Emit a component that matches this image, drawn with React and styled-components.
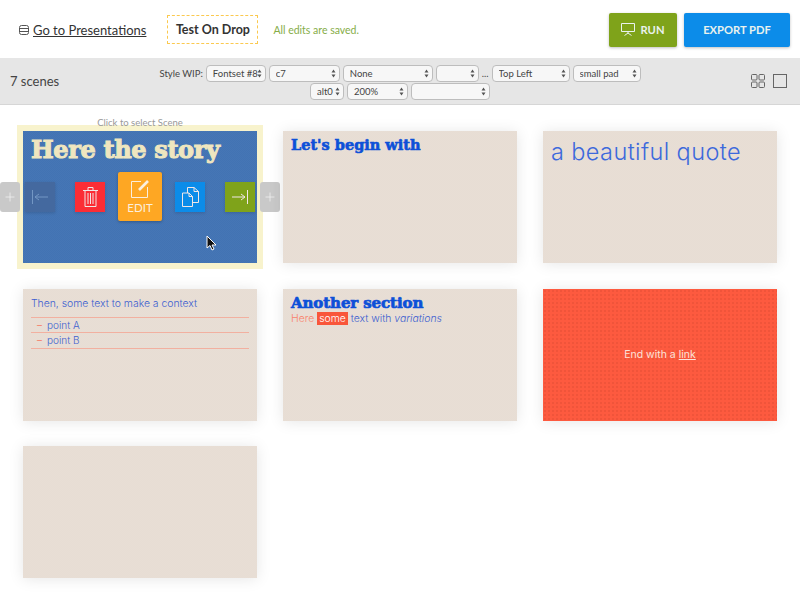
import React from 'react';
import styled, { createGlobalStyle } from 'styled-components';
import { Plus } from 'lucide-react';

const GlobalStyle = createGlobalStyle`
  html, body {
    margin: 0;
    padding: 0;
    background: #fff;
    font-family: Lato, "Liberation Sans", sans-serif;
    color: #333;
  }
`;

const Page = styled.div`
  width: 800px;
  height: 600px;
  overflow: hidden;
`;

const Header = styled.header`
  height: 58px;
  box-sizing: border-box;
  display: flex;
  align-items: center;
  padding: 1px 10px 0 19px;
`;

const BackLink = styled.a`
  display: flex;
  align-items: center;
  gap: 4px;
  font-size: 13px;
  color: #333;
  text-decoration: underline;
`;

const DeckName = styled.div`
  margin-left: 21px;
  width: 91px;
  height: 29px;
  box-sizing: border-box;
  border: 1px dashed #fbc94f;
  display: flex;
  align-items: center;
  justify-content: center;
  font-size: 12.5px;
  font-weight: 700;
  color: #333;
  white-space: nowrap;
`;

const Saved = styled.div`
  margin-left: 15px;
  font-size: 10.5px;
  color: #86ad48;
`;

const HeaderActions = styled.div`
  margin-left: auto;
  display: flex;
  gap: 7px;
`;

const ActionButton = styled.button`
  width: ${({ $width }) => $width}px;
  height: 34px;
  border: 0;
  border-radius: 2px;
  background: ${({ $color }) => $color};
  color: #e9f2ee;
  font-family: inherit;
  font-size: 11.2px;
  font-weight: 700;
  display: flex;
  align-items: center;
  justify-content: center;
  gap: 5px;
  box-shadow: 0 1px 3px rgba(0, 0, 0, 0.25);
`;

const Toolbar = styled.div`
  height: 47px;
  box-sizing: border-box;
  background: #e6e6e6;
  border-bottom: 1px solid #d6d6d6;
  display: flex;
  align-items: center;
  padding: 0 13px 0 10px;
  position: relative;
`;

const SceneCount = styled.div`
  width: 90px;
  font-size: 13px;
  color: #444;
`;

const StyleControls = styled.div`
  position: absolute;
  left: 150px;
  right: 150px;
  top: 7px;
  display: flex;
  flex-wrap: wrap;
  justify-content: center;
  align-items: center;
  gap: 1px 3px;
  font-size: 9.5px;
  color: #444;
`;

const SelectWrap = styled.span`
  position: relative;
  display: inline-flex;
  width: ${({ $width }) => $width}px;
  height: 17px;
`;

const Select = styled.select`
  appearance: none;
  width: 100%;
  height: 100%;
  box-sizing: border-box;
  margin: 0;
  padding: 0 0 0 6px;
  border: 1px solid #bdbdbd;
  border-radius: 4px;
  background: #f7f7f7;
  font-family: inherit;
  font-size: 9.5px;
  color: #444;
`;

const Chevrons = styled.svg`
  position: absolute;
  right: 4px;
  top: 4px;
  width: 5px;
  height: 9px;
  pointer-events: none;
`;

const ViewToggles = styled.div`
  margin-left: auto;
  display: flex;
  gap: 8px;
  color: #666;
`;

const Grid = styled.main`
  display: grid;
  grid-template-columns: repeat(3, 234px);
  grid-auto-rows: 132px;
  gap: 25.5px 26px;
  padding: 26px 0 0 23px;
`;

const Scene = styled.article`
  position: relative;
  box-sizing: border-box;
  background-color: ${({ $bg }) => $bg || '#e7ddd4'};
  background-image: ${({ $dotted }) =>
    $dotted
      ? 'radial-gradient(rgba(190, 60, 40, 0.2) 0.8px, transparent 1px)'
      : 'repeating-conic-gradient(rgba(255, 255, 255, 0.025) 0 25%, transparent 0 50%)'};
  background-size: ${({ $dotted }) => ($dotted ? '4px 4px' : '2px 2px')};
  padding: ${({ $padding }) => $padding || '6px 8px'};
  box-shadow: ${({ $selected }) =>
    $selected ? '0 0 0 6px #f8f3cd' : '0 1px 14px rgba(0, 0, 0, 0.1)'};
`;

const SelectHint = styled.div`
  position: absolute;
  top: -14px;
  left: 0;
  right: 0;
  text-align: center;
  font-size: 9.5px;
  color: #999;
`;

const SlabTitle = styled.h2`
  margin: 0;
  font-family: "DejaVu Serif", serif;
  font-weight: 700;
  font-size: ${({ $size }) => $size}px;
  line-height: ${({ $line }) => $line}px;
  color: ${({ $color }) => $color || '#0d50d8'};
  -webkit-text-stroke: ${({ $stroke }) => $stroke}px currentColor;
  letter-spacing: ${({ $spacing }) => $spacing || 0}px;
  white-space: nowrap;
`;

const Quote = styled.div`
  font-family: Inter, sans-serif;
  font-weight: 300;
  font-size: 23.5px;
  letter-spacing: 0.4px;
  line-height: 30px;
  color: #3d69dc;
`;

const BodyText = styled.p`
  margin: 0;
  font-family: Inter, sans-serif;
  font-weight: 300;
  font-size: 10.4px;
  line-height: 14px;
  color: #3d5fd0;
`;

const Points = styled.ul`
  list-style: none;
  margin: 6px 0 0;
  padding: 0;
  border-top: 1px solid #f2b0a0;
`;

const Point = styled.li`
  height: 14.5px;
  border-bottom: 1px solid #f2b0a0;
  padding-left: 6px;
  font-family: Inter, sans-serif;
  font-weight: 300;
  font-size: 10px;
  line-height: 14.5px;
  color: #3d5fd0;

  &::before {
    content: '–';
    color: #f9664a;
    margin-right: 5px;
  }
`;

const Salmon = styled.span`
  color: #f9826c;
`;

const Mark = styled.span`
  background: #f9563a;
  color: #fff;
  padding: 0 2px;
`;

const EndText = styled.div`
  height: 100%;
  display: flex;
  align-items: center;
  justify-content: center;
  gap: 3px;
  font-family: Inter, sans-serif;
  font-size: 10.5px;
  color: #fbe2da;

  a {
    color: inherit;
    text-decoration: underline;
  }
`;

const HoverControls = styled.div`
  position: absolute;
  left: 2px;
  top: 41px;
  height: 49px;
  display: flex;
  align-items: center;
  gap: 20px;
`;

const ControlButton = styled.button`
  width: 30px;
  height: 30px;
  padding: 0;
  border: 0;
  background: ${({ $color }) => $color};
  color: ${({ $faded }) => ($faded ? '#7397c4' : '#f1e6e6')};
  display: flex;
  align-items: center;
  justify-content: center;
  box-shadow: 0 1px 3px rgba(0, 0, 0, 0.15);
`;

const EditButton = styled.button`
  width: 44px;
  height: 49px;
  margin: 0 -7px;
  padding: 0;
  border: 0;
  border-radius: 2px;
  background: #fea723;
  color: #fbeedd;
  font-family: inherit;
  font-size: 11.5px;
  display: flex;
  flex-direction: column;
  align-items: center;
  justify-content: center;
  gap: 3px;
  box-shadow: 0 1px 3px rgba(0, 0, 0, 0.25);
`;

const InsertButton = styled.button`
  position: absolute;
  top: 51px;
  ${({ $side }) => ($side === 'left' ? 'left: -23px;' : 'right: -23px;')}
  width: 20px;
  height: 30px;
  padding: 0;
  border: 0;
  border-radius: 3px;
  background: #c9c9c9;
  color: #f5f5f5;
  display: flex;
  align-items: center;
  justify-content: center;
`;

const Cursor = styled.svg`
  position: absolute;
  left: 183px;
  top: 104px;
`;

const LineIcon = ({ width, height, children }) => (
  <svg
    width={width}
    height={height}
    viewBox={`0 0 ${width} ${height}`}
    fill="none"
    stroke="currentColor"
    strokeWidth="1"
  >
    {children}
  </svg>
);

const SelectField = ({ width, value }) => (
  <SelectWrap $width={width}>
    <Select defaultValue={value}>
      <option value={value}>{value}</option>
    </Select>
    <Chevrons viewBox="0 0 5 9">
      <path d="M2.5 0.5 L4.5 3.5 H0.5 Z M2.5 8.5 L0.5 5.5 H4.5 Z" fill="#555" />
    </Chevrons>
  </SelectWrap>
);

const App = () => (
  <Page>
    <GlobalStyle />
    <Header>
      <BackLink>
        <svg width="10" height="10" viewBox="0 0 10 10" fill="none" stroke="#555" strokeWidth="1">
          <rect x="0.5" y="0.5" width="9" height="9" rx="2" />
          <path d="M0.5 3.5 H9.5 M0.5 6.5 H9.5" />
        </svg>
        Go to Presentations
      </BackLink>
      <DeckName>Test On Drop</DeckName>
      <Saved>All edits are saved.</Saved>
      <HeaderActions>
        <ActionButton $width={68} $color="#7fa31a">
          <LineIcon width={14} height={13}>
            <path d="M0.5 0.5 H13.5 V8.5 H0.5 Z M7 8.5 V10.5 M7 10 L3.5 12.5 M7 10 L10.5 12.5" />
          </LineIcon>
          RUN
        </ActionButton>
        <ActionButton $width={106} $color="#0c8ce9">EXPORT PDF</ActionButton>
      </HeaderActions>
    </Header>

    <Toolbar>
      <SceneCount>7 scenes</SceneCount>
      <StyleControls>
        <span>Style WIP:</span>
        <SelectField width={60} value="Fontset #8" />
        <SelectField width={71} value="c7" />
        <SelectField width={90} value="None" />
        <SelectField width={43} value="" />
        <span>...</span>
        <SelectField width={78} value="Top Left" />
        <SelectField width={68} value="small pad" />
        <SelectField width={34} value="alt0" />
        <SelectField width={61} value="200%" />
        <SelectField width={79} value="" />
      </StyleControls>
      <ViewToggles>
        <svg width="14" height="14" viewBox="0 0 14 14" fill="none" stroke="currentColor" strokeWidth="1">
          <rect x="0.5" y="0.5" width="5.5" height="5.5" rx="1" />
          <rect x="8" y="0.5" width="5.5" height="5.5" rx="1" />
          <rect x="0.5" y="8" width="5.5" height="5.5" rx="1" />
          <rect x="8" y="8" width="5.5" height="5.5" rx="1" />
        </svg>
        <svg width="14" height="14" viewBox="0 0 14 14" fill="none" stroke="currentColor" strokeWidth="1">
          <rect x="0.5" y="0.5" width="13" height="13" />
        </svg>
      </ViewToggles>
    </Toolbar>

    <Grid>
      <Scene $bg="#4273b3" $selected>
        <SelectHint>Click to select Scene</SelectHint>
        <SlabTitle $size={24} $line={26} $color="#efe6bf" $stroke={1} $spacing={-0.35}>Here the story</SlabTitle>
        <HoverControls>
          <ControlButton $color="#44699f" $faded>
            <LineIcon width={18} height={14}>
              <path d="M1.5 0 V14 M4 7 H17 M4 7 L8 4 M4 7 L8 10" />
            </LineIcon>
          </ControlButton>
          <ControlButton $color="#fb2d35">
            <LineIcon width={15} height={20}>
              <path d="M0 3.5 H15 M5 3.5 V0.5 H10 V3.5 M2 3.5 V19.5 H13 V3.5 M5 6 V17 M7.5 6 V17 M10 6 V17" />
            </LineIcon>
          </ControlButton>
          <EditButton>
            <LineIcon width={20} height={19}>
              <path d="M11 2.5 H1.5 V18.5 H17.5 V8" />
              <path d="M9 11 L18 2" strokeWidth="2.6" />
            </LineIcon>
            EDIT
          </EditButton>
          <ControlButton $color="#0c8ce9">
            <LineIcon width={17} height={20}>
              <path d="M1 6 H7 L10.5 9.5 V19.5 H0.5 V6 Z M7 6 V9.5 H10.5" />
              <path d="M5.5 6 V0.5 H12 L16.5 4.5 V15.5 H10.5 M12 0.5 V4.5 H16.5" />
            </LineIcon>
          </ControlButton>
          <ControlButton $color="#7fa31a">
            <LineIcon width={18} height={14}>
              <path d="M16.5 0 V14 M14 7 H1 M14 7 L10 4 M14 7 L10 10" />
            </LineIcon>
          </ControlButton>
        </HoverControls>
        <InsertButton $side="left"><Plus size={14} strokeWidth={1.2} /></InsertButton>
        <InsertButton $side="right"><Plus size={14} strokeWidth={1.2} /></InsertButton>
        <Cursor width="12" height="16" viewBox="0 0 12 16">
          <path d="M1 1 V13 L4 10.5 L6 15 L8 14 L6 10 H10 Z" fill="#111" stroke="#fff" strokeWidth="1" />
        </Cursor>
      </Scene>

      <Scene>
        <SlabTitle $size={14.5} $line={16} $stroke={0.6}>Let's begin with</SlabTitle>
      </Scene>

      <Scene>
        <Quote>a beautiful quote</Quote>
      </Scene>

      <Scene $padding="8px 8px">
        <BodyText>Then, some text to make a context</BodyText>
        <Points>
          <Point>point A</Point>
          <Point>point B</Point>
        </Points>
      </Scene>

      <Scene $padding="6px 8px">
        <SlabTitle $size={15} $line={17} $stroke={0.7} $spacing={-0.1}>Another section</SlabTitle>
        <BodyText>
          <Salmon>Here</Salmon> <Mark>some</Mark> text with <em>variations</em>
        </BodyText>
      </Scene>

      <Scene $bg="#fd5a3f" $dotted>
        <EndText>End with a <a>link</a></EndText>
      </Scene>

      <Scene />
    </Grid>
  </Page>
);

export default App;
